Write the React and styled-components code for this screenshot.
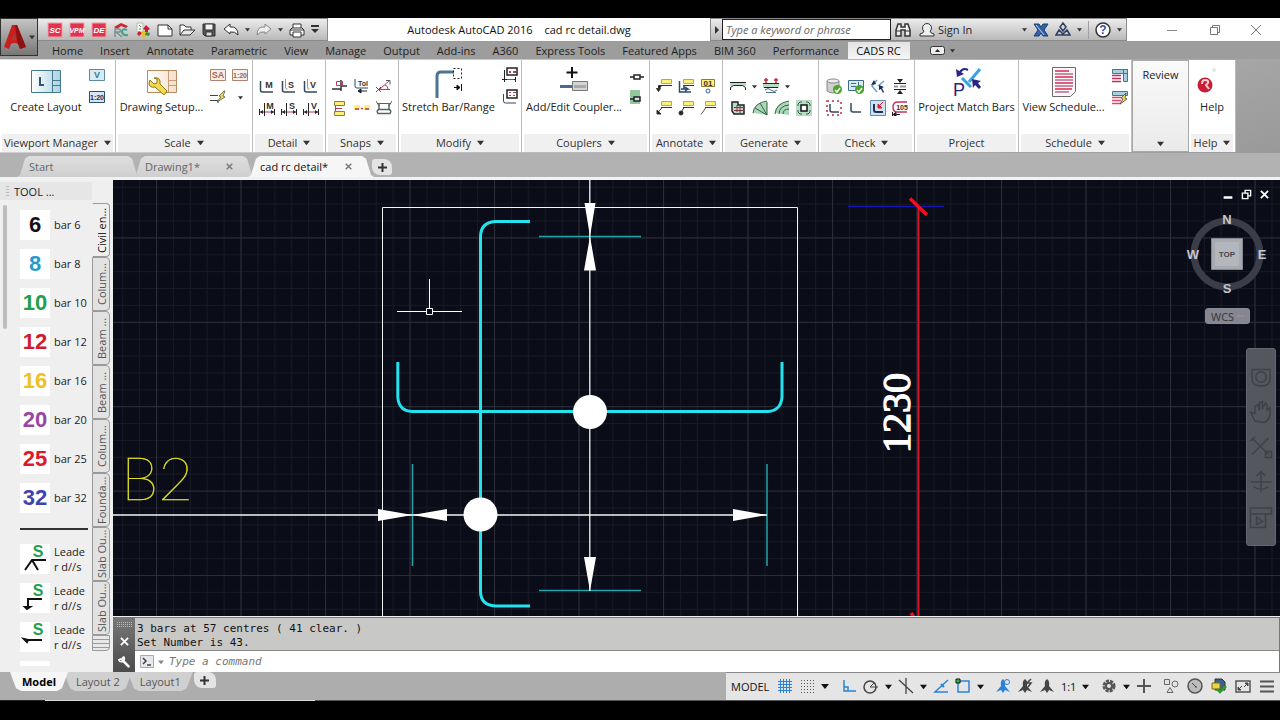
import styled, { createGlobalStyle } from "styled-components";

const GlobalStyle = createGlobalStyle`
  * {
    box-sizing: border-box;
  }
  body {
    margin: 0;
    background: #000;
    font-family: "Open Sans", "Noto Sans", sans-serif;
    font-size: 11px;
    color: #222;
  }
  button, input {
    font: inherit;
    color: inherit;
    border: none;
    background: none;
    padding: 0;
    margin: 0;
  }
  svg {
    display: block;
    flex: none;
  }
`;

const Screen = styled.div`
  display: flex;
  flex-direction: column;
  height: 100vh;
  padding: 18px 0 19px;
  background: #000;
  overflow: hidden;
`;

/* ---------- header ---------- */

const Header = styled.header`
  display: flex;
  flex: none;
  background: #9d9d9d;
`;

const AppButton = styled.button`
  display: flex;
  align-items: center;
  justify-content: center;
  gap: 3px;
  width: 38px;
  height: 38px;
  flex: none;
  border: 1px solid #333;
  background: linear-gradient(#c4c4c4, #777);
`;

const HeaderMain = styled.div`
  flex: 1;
  min-width: 0;
`;

const TitleBar = styled.div`
  display: flex;
  height: 23px;
  background: #fff;
`;

const QuickAccess = styled.div`
  display: flex;
  align-items: center;
  gap: 6px;
  padding: 0 8px 0 9px;
  border: 1px solid #8a8a8a;
  border-left: none;
  background: linear-gradient(#ececec, #b9b9b9);
`;

const WindowTitle = styled.h1`
  flex: 1;
  display: flex;
  align-items: center;
  justify-content: center;
  gap: 12px;
  margin: 0;
  font-size: 11px;
  font-weight: 400;
  color: #111;
  white-space: nowrap;
`;

const InfoCenter = styled.div`
  display: flex;
  align-items: center;
  width: 417px;
  border: 1px solid #8a8a8a;
  background: linear-gradient(#ececec, #b9b9b9);
`;

const SearchBox = styled.input`
  width: 169px;
  height: 21px;
  padding: 0 3px;
  border: 1px solid #222;
  background: #fff;
  &::placeholder {
    color: #666;
    font-style: italic;
    opacity: 1;
  }
`;

const SignIn = styled.button`
  display: flex;
  align-items: center;
  gap: 3px;
  flex: 1;
  margin-left: 4px;
`;

const InfoTools = styled.div`
  display: flex;
  align-items: center;
  gap: 6px;
  padding-right: 4px;
`;

const Separator = styled.span`
  width: 1px;
  height: 18px;
  background: #a0a0a0;
`;

const WindowButtons = styled.div`
  display: flex;
  align-items: center;
  justify-content: flex-end;
  gap: 26px;
  width: 153px;
  padding-right: 16px;
`;

const MenuTabs = styled.nav`
  display: flex;
  align-items: flex-end;
  height: 18px;
  padding-left: 6px;
`;

const MenuTab = styled.button`
  height: 17px;
  padding: 0 9px 0 8px;
  line-height: 17px;
  white-space: nowrap;
  color: ${(p) => (p.$active ? "#111" : "#222")};
  background: ${(p) => (p.$active ? "linear-gradient(#e2e2e2, #f6f6f6)" : "none")};
`;

const MenuToggle = styled.button`
  display: flex;
  align-items: center;
  gap: 5px;
  height: 17px;
  margin-left: 20px;
`;

const IconButton = styled.button`
  display: flex;
  align-items: center;
  justify-content: center;
  flex: none;
`;

/* ---------- ribbon ---------- */

const Ribbon = styled.section`
  display: flex;
  flex: none;
  height: 94px;
  padding: 1px 1px 1px 0;
  background: linear-gradient(160deg, #dcdcdc, #999);
`;

const Panel = styled.div`
  display: flex;
  flex-direction: column;
  flex: none;
  width: ${(p) => p.$width}px;
  border-right: 1px solid #bdbdbd;
  background: #fff;
`;

const PanelBody = styled.div`
  display: flex;
  flex: 1;
  justify-content: center;
  gap: 7px;
  padding-top: ${(p) => p.$top || 7}px;
`;

const PanelTitle = styled.button`
  display: flex;
  align-items: center;
  justify-content: center;
  gap: 6px;
  height: 18px;
  margin: 0 2px;
  padding-bottom: 2px;
  background: #f0f0f0;
  color: #333;
  white-space: nowrap;
`;

const BigButton = styled.button`
  display: flex;
  flex-direction: column;
  align-items: center;
  justify-content: space-between;
  height: 48px;
  white-space: nowrap;
  line-height: 16px;
`;

const SmallGrid = styled.div`
  display: grid;
  grid-template-columns: repeat(${(p) => p.$cols}, 16px);
  grid-auto-rows: 16px;
  gap: 6px;
  align-content: start;
`;

const ToolRow = styled.div`
  display: flex;
  align-items: center;
  gap: 6px;
  height: 16px;
`;

const ToolRows = styled.div`
  display: flex;
  flex-direction: column;
  gap: 6px;
`;

const ReviewPanel = styled.button`
  display: flex;
  flex-direction: column;
  align-items: center;
  justify-content: space-between;
  width: 57px;
  padding: 6px 0 4px;
  border: 1px solid #a8a8a8;
  background: linear-gradient(#fafafa, #eaeaea);
`;

/* ---------- file tabs ---------- */

const FileTabs = styled.nav`
  display: flex;
  align-items: flex-end;
  flex: none;
  height: 27px;
  padding-left: 17px;
  border-bottom: 3px solid #f2f2f2;
  background: #b2b2b2;
`;

const FileTab = styled.div`
  position: relative;
  display: flex;
  align-items: center;
  justify-content: space-between;
  width: ${(p) => p.$width}px;
  height: 21px;
  margin-right: -7px;
  padding: 0 22px 0 12px;
  color: ${(p) => (p.$active ? "#111" : "#666")};
  z-index: ${(p) => (p.$active ? 2 : 0)};
  &::before {
    content: "";
    position: absolute;
    inset: 0;
    z-index: -1;
    background: ${(p) => (p.$active ? "#f6f6f6" : "linear-gradient(#dedede, #cfcfcf)")};
    clip-path: polygon(
      0 100%, 3px 90%, 8px 12%, 12px 0,
      calc(100% - 12px) 0, calc(100% - 8px) 12%, calc(100% - 3px) 90%, 100% 100%
    );
  }
`;

const AddTab = styled.button`
  display: flex;
  align-items: center;
  justify-content: center;
  width: ${(p) => p.$width || 20}px;
  height: 16px;
  margin: 0 0 2px 5px;
  border-radius: 3px 8px 3px 8px;
  background: #e4e4e4;
`;

/* ---------- workspace ---------- */

const Workspace = styled.main`
  display: flex;
  flex: 1;
  min-height: 0;
`;

const Palette = styled.aside`
  display: flex;
  flex: none;
  width: 113px;
  background: #efefef;
`;

const PaletteMain = styled.div`
  display: flex;
  flex-direction: column;
  flex: 1;
  min-width: 0;
  overflow: hidden;
`;

const PaletteTitle = styled.div`
  display: flex;
  align-items: center;
  gap: 5px;
  height: 18px;
  margin-top: 2px;
  padding-left: 6px;
  background: #e6e6e6;
  color: #222;
`;

const PaletteScroll = styled.div`
  display: flex;
  gap: 13px;
  flex: 1;
  min-height: 0;
  padding: 5px 4px 6px 3px;
`;

const Thumb = styled.div`
  flex: none;
  width: 4px;
  height: 124px;
  border-radius: 2px;
  background: #bdbdbd;
`;

const PaletteList = styled.div`
  flex: 1;
  overflow: hidden;
`;

const PaletteItem = styled.button`
  display: flex;
  align-items: center;
  gap: 4px;
  width: 100%;
  height: 39px;
  line-height: 15px;
  text-align: left;
`;

const Swatch = styled.span`
  display: flex;
  align-items: center;
  justify-content: center;
  flex: none;
  width: 30px;
  height: 30px;
  background: #fff;
  color: ${(p) => p.$color};
  font: bold 22px "Liberation Sans", Arial, sans-serif;
`;

const ItemLabel = styled.span`
  width: 33px;
  word-break: ${(p) => (p.$wrap ? "break-all" : "normal")};
  white-space: ${(p) => (p.$wrap ? "normal" : "nowrap")};
`;

const Divider = styled.hr`
  height: 2px;
  margin: 11px 0 9px -6px;
  border: none;
  background: #333;
`;

const PaletteTabs = styled.div`
  display: flex;
  flex-direction: column;
  width: 18px;
  margin: 23px 3px 0 0;
`;

const PaletteTab = styled.button`
  display: flex;
  align-items: center;
  justify-content: center;
  height: 54px;
  writing-mode: vertical-rl;
  transform: rotate(180deg);
  border: 1px solid #9a9a9a;
  border-right-color: ${(p) => (p.$active ? "#efefef" : "#9a9a9a")};
  border-radius: 4px 0 0 4px;
  background: ${(p) => (p.$active ? "#efefef" : "#e2e2e2")};
  color: ${(p) => (p.$active ? "#111" : "#555")};
  white-space: nowrap;
`;

const TabStack = styled.div`
  height: 16px;
  border: 1px solid #9a9a9a;
  border-radius: 0 0 4px 0;
  background: repeating-linear-gradient(#e8e8e8 0 3px, #9a9a9a 3px 4px);
`;

const Editor = styled.div`
  display: flex;
  flex-direction: column;
  flex: 1;
  min-width: 0;
`;

const Canvas = styled.div`
  position: relative;
  flex: 1;
  min-height: 0;
  overflow: hidden;
  border-bottom: 1px solid #f0f0f0;
  background: #0a0c17;
`;

const Drawing = styled.svg`
  position: absolute;
  inset: 0;
  width: 100%;
  height: 100%;
`;

const ViewportButtons = styled.div`
  position: absolute;
  top: 9px;
  right: 11px;
  display: flex;
  gap: 8px;
`;

const ViewCube = styled.div`
  position: absolute;
  top: 32px;
  right: 10px;
`;

const WcsButton = styled.button`
  position: absolute;
  top: 128px;
  right: 30px;
  display: flex;
  align-items: center;
  justify-content: space-between;
  width: 45px;
  height: 16px;
  padding: 0 5px;
  border: 1px solid #8b8d96;
  border-radius: 3px;
  background: #85868f;
  color: #33353d;
`;

const NavBar = styled.div`
  position: absolute;
  top: 168px;
  right: 4px;
  display: flex;
  flex-direction: column;
  align-items: center;
  justify-content: space-between;
  width: 30px;
  height: 198px;
  padding: 16px 0;
  border: 1px solid #65666e;
  border-radius: 3px;
  background: #55575e;
`;

/* ---------- command line ---------- */

const Command = styled.section`
  display: flex;
  flex: none;
  height: 55px;
  padding: 1px 1px 0 0;
  background: #777;
`;

const CommandGrip = styled.div`
  display: flex;
  flex-direction: column;
  align-items: center;
  justify-content: space-between;
  width: 22px;
  padding: 4px 0 4px;
  background: linear-gradient(#777, #4c4c4c);
`;

const CommandBody = styled.div`
  flex: 1;
  font-family: "DejaVu Sans Mono", monospace;
`;

const History = styled.div`
  height: 33px;
  padding: 4px 2px;
  line-height: 14px;
  border-bottom: 1px solid #888;
  background: #c8c8c6;
  color: #111;
  white-space: pre;
`;

const Prompt = styled.label`
  display: flex;
  align-items: center;
  gap: 4px;
  height: 21px;
  padding-left: 5px;
  background: #fff;
`;

const CommandInput = styled.input`
  flex: 1;
  height: 18px;
  margin-left: 1px;
  outline: none;
  &::placeholder {
    color: #777;
    font-style: italic;
    opacity: 1;
  }
`;

/* ---------- footer ---------- */

const Footer = styled.footer`
  display: flex;
  flex: none;
  height: 28px;
  background: #adadad;
`;

const ScreenEdge = styled.div`
  flex: none;
  height: 1px;
  background: linear-gradient(90deg, #222 45px, #d8d8d8 45px 315px, #555 315px);
`;

const LayoutTabs = styled.nav`
  display: flex;
  align-items: flex-start;
  flex: 1;
  padding-left: 10px;
`;

const LayoutTab = styled.button`
  position: relative;
  height: 19px;
  margin-right: -4px;
  padding: 0 12px 1px;
  z-index: ${(p) => (p.$active ? 2 : 0)};
  color: ${(p) => (p.$active ? "#000" : "#555")};
  font-weight: ${(p) => (p.$active ? 700 : 400)};
  white-space: nowrap;
  &::before {
    content: "";
    position: absolute;
    inset: 0;
    z-index: -1;
    background: ${(p) => (p.$active ? "#f6f6f6" : "#d0d0d0")};
    clip-path: polygon(
      0 0, 100% 0, calc(100% - 6px) 85%, calc(100% - 11px) 100%,
      11px 100%, 6px 85%
    );
  }
`;

const StatusBar = styled.div`
  display: flex;
  align-items: center;
  justify-content: space-between;
  width: 554px;
  padding: 0 5px 1px;
  border-top: 1px solid #888;
  background: #e5e5e5;
  color: #111;
`;

const StatusGroup = styled.div`
  display: flex;
  align-items: center;
  gap: ${(p) => p.$gap || 6}px;
`;

const Icon = ({ size = 16, box = "0 0 16 16", children, h }) => (
  <svg
    width={size}
    height={h || size}
    viewBox={box}
    fill="none"
    stroke="#333"
    aria-hidden="true"
  >
    {children}
  </svg>
);

const Caret = ({ w = 7, color = "#333" }) => (
  <svg width={w} height={w} viewBox="0 0 8 8" fill={color} aria-hidden="true">
    <path d="M0 2h8L4 7z" />
  </svg>
);

const Cross = ({ size = 9, color = "#777", width = 2 }) => (
  <svg width={size} height={size} viewBox="0 0 10 10" stroke={color} strokeWidth={width} aria-hidden="true">
    <path d="M1 1l8 8M9 1l-8 8" />
  </svg>
);

const Plus = () => (
  <svg width="9" height="9" viewBox="0 0 9 9" stroke="#333" strokeWidth="2" aria-hidden="true">
    <path d="M4.500 0v9M0 4.500h9" />
  </svg>
);

const Glyph = ({ x, y, size = 8, color = "#333", italic, light, children }) => (
  <text
    x={x}
    y={y}
    fontSize={size}
    fill={color}
    stroke="none"
    fontWeight={light ? 400 : 700}
    fontStyle={italic ? "italic" : "normal"}
    fontFamily="Liberation Sans, sans-serif"
    textAnchor="middle"
  >
    {children}
  </text>
);

const Tool = ({ label, children }) => (
  <IconButton aria-label={label}>{children}</IconButton>
);

const RedBadge = ({ text }) => (
  <Icon>
    <rect x="1" y="1" width="14" height="14" fill="#e0334c" stroke="#f3a0aa" />
    <Glyph x="8" y="11" size={text.length > 2 ? 7 : 8} color="#fff" italic>
      {text}
    </Glyph>
  </Icon>
);

const quickTools = [
  ["SC", <RedBadge text="SC" />],
  ["VPM", <RedBadge text="VPM" />],
  ["DE", <RedBadge text="DE" />],
  [
    "RC",
    <Icon>
      <path d="M1 5l7-4 7 3-2 2-5-2-4 3z" fill="#d3242f" stroke="none" />
      <path d="M2 15V7h4q2 0 1 3H3l6 5" stroke="#7d8f92" strokeWidth="1.500" />
      <path d="M14 8q-5-2-5 2 1 4 6 3" stroke="#3aa58d" strokeWidth="2" />
    </Icon>,
  ],
  [
    "Add-in",
    <Icon>
      <path d="M2 1h6v9H2z" fill="#f4f4f4" stroke="#bbb" />
      <path d="M4 3l2 2M4 7h2" stroke="#4b9a3d" />
      <path d="M7 9h4v6H7z" fill="#e9be2a" stroke="none" />
      <path d="M11 3l4 4-2 1v2h-3V8L8 7zM4 9l3 2-3 3-2-2z" fill="#c8202c" stroke="none" />
      <path d="M11 10l4 1-1 3-4-1z" fill="#3c8c34" stroke="none" />
    </Icon>,
  ],
  [
    "New",
    <Icon>
      <path d="M1 3h10l4 4v7H1z" fill="#fff" />
      <path d="M11 3v4h4" />
    </Icon>,
  ],
  [
    "Open",
    <Icon>
      <path d="M1 13V3h4l2 2h5v3" fill="#fff" />
      <path d="M1 13l4-5h11l-5 5z" fill="#e8e8e8" />
    </Icon>,
  ],
  [
    "Save",
    <Icon>
      <path d="M2 2h12v12H4l-2-2z" fill="#555" />
      <path d="M4 2h8v6H4z" fill="#f2f2f2" />
      <path d="M5 10h6v4H5z" fill="#ddd" />
    </Icon>,
  ],
  [
    "Undo",
    <Icon>
      <path d="M1 7l6-5v3q8-1 8 8-3-4-8-3v2z" fill="#fff" />
    </Icon>,
  ],
  ["Undo list", <Caret w={5} />],
  [
    "Redo",
    <Icon>
      <path d="M15 7L9 2v3q-8-1-8 8 3-4 8-3v2z" fill="#eee" stroke="#888" />
    </Icon>,
  ],
  ["Redo list", <Caret w={5} />],
  [
    "Plot",
    <Icon>
      <path d="M4 6V2h8v4M4 13H1V8l2-2h10l2 2v5h-3" fill="#fff" />
      <path d="M4 10h8v5H4z" fill="#fff" />
      <path d="M1 8h14" />
    </Icon>,
  ],
  [
    "Customize",
    <svg width="8" height="9" viewBox="0 0 8 9" fill="#333" aria-hidden="true">
      <path d="M0 0h8v2H0zM0 4h8L4 8z" />
    </svg>,
  ],
];

const menuTabs = [
  "Home",
  "Insert",
  "Annotate",
  "Parametric",
  "View",
  "Manage",
  "Output",
  "Add-ins",
  "A360",
  "Express Tools",
  "Featured Apps",
  "BIM 360",
  "Performance",
  "CADS RC",
];

const BoxedText = ({ text, stroke, fill, color }) => (
  <Icon>
    <path d="M.5 2.500h15v11H.5z" fill={fill} stroke={stroke} />
    <Glyph x="8" y="11" size={text.length > 2 ? 7 : 9} color={color}>
      {text}
    </Glyph>
  </Icon>
);

const DetailBar = ({ letter }) => (
  <Icon>
    <path d="M1.500 3v9q0 2 2 2H14" stroke="#34495e" strokeWidth="1.500" />
    {letter !== "M" && <path d="M4.500 1v9q0 1 2 1" stroke="#999" />}
    <Glyph x="10" y="10" size={9}>
      {letter}
    </Glyph>
  </Icon>
);

const DetailRange = ({ letter }) => (
  <Icon>
    <path d="M1 12h14" stroke="#b0304f" />
    <path d="M.5 9v6M15.500 9v6M5.500 3v13" stroke="#222" />
    <path d="M1 12l3-2v4zM15 12l-3-2v4z" fill="#222" stroke="none" />
    <Glyph x="11" y="9" size={9}>
      {letter}
    </Glyph>
  </Icon>
);

const Leader = ({ kind }) => (
  <Icon>
    <path d="M5.500 1.500h10v4h-10z" fill="#fbf07a" stroke="#b9a845" />
    <path d="M5 7.500h11" stroke="#333" />
    {kind === "down" && <path d="M6 7.500H2.500v5M.5 10.500l2 3 2-3z" fill="#222" />}
    {kind === "bar" && <path d="M1.500 3v11H13M6 7v4M3 11h7l-3-2M7 13l3-2" stroke="#2b4964" strokeWidth="1.500" />}
    {kind === "arrow" && <path d="M6 7.500l-4 5M1 10v4h4z" fill="#222" />}
    {kind === "dot" && (
      <>
        <path d="M6 7.500l-3 5" />
        <circle cx="3" cy="13" r="2" fill="#222" />
      </>
    )}
    {kind === "plain" && <path d="M6 7.500l-5 7" stroke="#555" />}
  </Icon>
);

const detailTools = (
  <SmallGrid $cols={3}>
    {["M", "S", "V"].map((l) => (
      <Tool key={l} label={`Bar ${l}`}>
        <DetailBar letter={l} />
      </Tool>
    ))}
    {["M", "S", "V"].map((l) => (
      <Tool key={l} label={`Range ${l}`}>
        <DetailRange letter={l} />
      </Tool>
    ))}
  </SmallGrid>
);

const snapTools = (
  <SmallGrid $cols={3}>
    <Tool label="Snap line">
      <Icon>
        <path d="M0 11h9M9 2v11M9 8h6" stroke="#333" strokeWidth="1.500" />
        <path d="M4.500 3.500h6v4h-6z" stroke="#c2345a" />
      </Icon>
    </Tool>
    <Tool label="Tolerance">
      <Icon>
        <path d="M1 1v7q0 2 2 2h11" stroke="#2b4964" />
        <path d="M4 13h9M4 13l3-2v4z" fill="#222" stroke="#222" />
        <Glyph x="9" y="8" size={7}>
          Tol
        </Glyph>
      </Icon>
    </Tool>
    <Tool label="Snap angle">
      <Icon>
        <path d="M3 12L14 2M3 11.500h11M9 7q3 1 3 4" stroke="#c2345a" />
        <path d="M0 9l5 5M5 9l-5 5M10 2.500h4v4" stroke="#555" />
      </Icon>
    </Tool>
    <Tool label="Snap edges">
      <Icon>
        <path d="M2.500 1.500h10v4h-10zM2.500 11.500h10v4h-10z" fill="#fbf07a" stroke="#8a7d3e" />
        <path d="M3.500 6v5M3 8.500h7" stroke="#c2345a" />
      </Icon>
    </Tool>
    <Tool label="Snap middle">
      <Icon>
        <path d="M0 5h6v5H0zM10 5h6v5h-6z" fill="#fbf07a" stroke="none" />
        <path d="M1 9h4M7 8.500h2M11 9h4" stroke="#c2345a" strokeWidth="1.500" />
      </Icon>
    </Tool>
    <Tool label="Snap shape">
      <Icon>
        <path d="M2 13.500h12q2-3-1-4H3q-3 1-1 4zM3 9V4M13 9V4" stroke="#566" strokeWidth="1.500" />
        <path d="M1 3.500h14M0 1l3 5M16 1l-3 5" stroke="#566" />
      </Icon>
    </Tool>
  </SmallGrid>
);

const annotateTools = (
  <SmallGrid $cols={3}>
    <Tool label="Leader down">
      <Leader kind="down" />
    </Tool>
    <Tool label="Leader bar">
      <Leader kind="bar" />
    </Tool>
    <Tool label="Bar mark">
      <Icon>
        <path d="M1.500 1.500h13v7h-13z" fill="#fbf07a" stroke="#8a7d3e" />
        <Glyph x="8" y="8" size={8}>
          01
        </Glyph>
        <circle cx="8" cy="13" r="2" stroke="#34609a" />
      </Icon>
    </Tool>
    <Tool label="Leader arrow">
      <Leader kind="arrow" />
    </Tool>
    <Tool label="Leader dot">
      <Leader kind="dot" />
    </Tool>
    <Tool label="Leader plain">
      <Leader kind="plain" />
    </Tool>
  </SmallGrid>
);

const generateTools = (
  <ToolRows>
    <ToolRow>
      <Tool label="Slab">
        <Icon>
          <path d="M0 4h16v4H0z" fill="#b9dcc4" stroke="none" />
          <path d="M0 4.500h16M.5 12V9.500l3-2h9l3 2V12" stroke="#222" />
        </Icon>
      </Tool>
      <Caret w={5} />
      <Tool label="Beam">
        <Icon>
          <path d="M0 5h16v5H0z" fill="#b9dcc4" stroke="none" />
          <path d="M0 5.500h16M1 9.500h14" stroke="#222" />
          <path d="M3 0v5M1 2h4M13 0v5M11 2h4" stroke="#c8283c" strokeWidth="1.500" />
          <path d="M2 12q3-3 6 0t6 0M3 14.500h10" stroke="#4c6d8a" />
        </Icon>
      </Tool>
      <Caret w={5} />
    </ToolRow>
    <ToolRow>
      <Tool label="Wall">
        <Icon>
          <path d="M2 2h6v3h6v9H4l-2-3z" fill="#b9dcc4" stroke="#222" strokeWidth="1.500" />
          <path d="M4 7.500h9M4 10.500h9M7 5v7M10 6v7" stroke="#7d3545" />
        </Icon>
      </Tool>
      <Tool label="Fan">
        <Icon>
          <path d="M15 15V2Q2 3 1 13z" fill="#a9d8b8" stroke="none" />
          <path d="M1 13Q2 3 15 1M15 15L3 8M15 15L8 3M15 15V2" stroke="#355e45" />
        </Icon>
      </Tool>
      <Tool label="Arc">
        <Icon>
          <path d="M15 15V2Q2 3 1 13z" fill="#a9d8b8" stroke="none" />
          <path d="M1 14Q2 3 15 1M5 14q0-8 10-9M9 14q0-5 6-5" stroke="#355e45" />
        </Icon>
      </Tool>
      <Tool label="Column">
        <Icon>
          <path d="M0 0h16v16H0z" fill="#b9dcc4" stroke="none" />
          <path d="M5 5h6v6H5z" fill="#fff" stroke="#111" strokeWidth="1.500" />
          <path d="M2 6V4l2-2h2M10 2h2l2 2v2M2 10v2l2 2h2M10 14h2l2-2v-2" stroke="#355e45" />
        </Icon>
      </Tool>
    </ToolRow>
  </ToolRows>
);

const checkTools = (
  <SmallGrid $cols={4}>
    <Tool label="Check database">
      <Icon>
        <path d="M1 3v10q6 4 12 0V3" fill="#cfcfcf" stroke="#888" />
        <ellipse cx="7" cy="3" rx="6" ry="2" fill="#eee" stroke="#888" />
        <circle cx="11.500" cy="11.500" r="4.500" fill="#4aa52e" stroke="none" />
        <path d="M9 12l2 2 3-4" stroke="#fff" strokeWidth="1.500" />
      </Icon>
    </Tool>
    <Tool label="Check schedule">
      <Icon>
        <path d="M.5 2.500h15v10H.5z" fill="#dbe9f2" stroke="#3f6c86" />
        <path d="M3 5.500h5M3 8.500h5M10.500 4v5" stroke="#3f6c86" />
        <circle cx="11.500" cy="11.500" r="4.500" fill="#4aa52e" stroke="none" />
        <path d="M9 12l2 2 3-4" stroke="#fff" strokeWidth="1.500" />
      </Icon>
    </Tool>
    <Tool label="Check links">
      <Icon>
        <path d="M7 2L2 8l5 6M8 8l6-5" stroke="#6f9fc4" strokeWidth="1.500" />
        <path d="M4 2l-3 5 5-1zM9 7l5 2-2 1 2 4-1 1-2-4-2 1z" fill="#1e2c58" stroke="none" />
      </Icon>
    </Tool>
    <Tool label="Check spacing">
      <Icon>
        <path d="M2 5.500h12M2 11.500h12" stroke="#222" />
        <path d="M8 5L5 1h6zM8 12l-3 4h6z" fill="#222" stroke="none" />
        <path d="M2 8.500h4M8 8.500h6" stroke="#999" strokeWidth="2" />
      </Icon>
    </Tool>
    <Tool label="Check area">
      <Icon>
        <path d="M1 1h14v14H1z" stroke="#c8283c" strokeWidth="1.500" strokeDasharray="2 3" />
        <path d="M4 4v6q0 2 2 2h7" stroke="#34495e" strokeWidth="1.500" />
      </Icon>
    </Tool>
    <Tool label="Check bar">
      <Icon>
        <path d="M3 3v7q0 2 2 2h8" stroke="#34495e" strokeWidth="1.500" />
      </Icon>
    </Tool>
    <Tool label="Check shape">
      <Icon>
        <path d="M.5.5h15v15H.5z" fill="#cfe2f1" stroke="#6488a8" />
        <path d="M4 4v6q0 2 2 2h7" stroke="#1e3656" strokeWidth="2" />
        <path d="M13 2L9 6M8 4v4h4z" fill="#d8232f" stroke="#d8232f" />
      </Icon>
    </Tool>
    <Tool label="Check number">
      <Icon>
        <path d="M15 2H6Q1 2 1 7q0 5 4 5h10" stroke="#c2345a" strokeWidth="1.500" />
        <path d="M1 14.500h7M.5 12v4M1 14.500l3-2v4z" fill="#222" stroke="#222" />
        <Glyph x="10" y="10" size={7}>
          105
        </Glyph>
      </Icon>
    </Tool>
  </SmallGrid>
);

const SheetIcon = ({ warm }) => (
  <Icon size={30} h={28} box="0 0 30 28">
    <defs>
      <linearGradient id={warm ? "warm" : "cool"} x1="0" x2="1">
        <stop offset="0" stopColor="#fff" />
        <stop offset="1" stopColor={warm ? "#f6dfc8" : "#a9d3e4"} />
      </linearGradient>
    </defs>
    <path d="M.5 3.500h29v22H.5z" fill={`url(#${warm ? "warm" : "cool"})`} stroke={warm ? "#b98b62" : "#46788c"} />
    <path d="M21.500 4v21M21.500 13.500h8M21.500 18.500h8" stroke={warm ? "#c99b76" : "#46788c"} />
    {warm ? (
      <path
        d="M3 13l4 4 3-1v-4l-3-1q5-1 6 3v3l7 7-3 4-9-8q-6 1-6-4z"
        fill="#f3dc4c"
        stroke="#8d7420"
      />
    ) : (
      <path d="M9 10v8h4" stroke="#36566b" strokeWidth="2" />
    )}
  </Icon>
);

const StretchIcon = () => (
  <Icon size={28} h={32} box="0 0 28 32">
    <path d="M2 31V9q0-4 4-4h13" stroke="#4d7396" strokeWidth="3" />
    <path d="M18.500 1.500h8v10h-8z" stroke="#222" strokeDasharray="2 2" />
    <path d="M19 20.500h6M22 18l3 2.500-3 2.500zM26.500 17v7" fill="#111" stroke="#111" />
  </Icon>
);

const CouplerIcon = () => (
  <Icon size={28} h={32} box="0 0 28 32">
    <path d="M12 0v11M6.500 5.500h11" stroke="#111" strokeWidth="2" />
    <path d="M0 19.500h14" stroke="#486a8c" strokeWidth="3" />
    <path d="M12.500 14.500h15v9h-15z" fill="#d5d5d5" stroke="#777" />
    <path d="M14 18h12v3H14z" fill="#aaa" stroke="none" />
  </Icon>
);

const MatchIcon = () => (
  <Icon size={32} h={32} box="0 0 32 32">
    <path d="M29 2L18 15M11 11l9 9" stroke="#37a4e0" strokeWidth="3" />
    <path d="M17 3Q11 0 8 7" stroke="#2b2480" strokeWidth="2" />
    <path d="M5 2l1 8 7-3zM21 12l9 2-3 2 3 4-2 2-4-4-2 3z" fill="#2b2480" stroke="none" />
    <Glyph x="8" y="29" size={18} color="#2b2480" light>
      P
    </Glyph>
  </Icon>
);

const ScheduleIcon = () => (
  <Icon size={24} h={31} box="0 0 24 31">
    <path d="M.5.5h23v24l-5 5H.5z" fill="#fff7f8" stroke="#6b6b6b" />
    <path d="M3 4h14M3 10h18M3 16h18M3 22h17" stroke="#e35b7c" strokeWidth="2" />
    <path d="M3 7h18M3 13h18M3 19h18M3 25h14" stroke="#8c2750" />
  </Icon>
);

const CanvasDrawing = () => (
  <Drawing viewBox="113 180 1167 437" preserveAspectRatio="xMinYMin slice" aria-hidden="true">
    <defs>
      <pattern id="minor" x="156" y="153" width="16.900" height="16.880" patternUnits="userSpaceOnUse">
        <path d="M.5 0v17M0 .5h17" stroke="#171a25" fill="none" />
      </pattern>
      <pattern id="major" x="156" y="153" width="84.500" height="84.400" patternUnits="userSpaceOnUse">
        <path d="M.5 0v85M0 .5h85" stroke="#2b2d38" fill="none" />
      </pattern>
    </defs>
    <rect x="113" y="180" width="1167" height="437" fill="url(#minor)" />
    <rect x="113" y="180" width="1167" height="437" fill="url(#major)" />
    <path d="M382.500 617V207.500h415V617" fill="none" stroke="#f4f4f4" />
    <g stroke="#25a3ab" strokeWidth="1.500">
      <path d="M539 236.500h102M539 590.500h102M412.500 464v102M767 464v102" />
    </g>
    <g fill="none" stroke="#22e3ee" strokeWidth="3">
      <path d="M530 221.500h-35q-14.500 1-14.500 15.500v354q0 14 14.500 15h35" />
      <path d="M397.800 362v35q1 14 14.200 14.500h356q13-1 14-14.500v-35" />
    </g>
    <path d="M589.800 180v411M113 515h654" stroke="#f4f4f4" strokeWidth="1.300" />
    <g fill="#fff">
      <path d="M584.500 203h11L590 236.500zM584 270.500h12l-6-34zM584 557h12l-6 34z" />
      <path d="M378 509v12l34.500-6zM447 509v12l-34.500-6zM733 509v12l34-6z" />
      <circle cx="590" cy="412" r="17" />
      <circle cx="480.500" cy="514.500" r="17" />
    </g>
    <path d="M429.500 279v29M397 311.500h29M433 311.500h29M426.500 308.500h6v6h-6z" fill="none" stroke="#fff" />
    <path d="M848 206.500h96" stroke="#1515b4" strokeWidth="1.500" />
    <path d="M918.500 207v410" stroke="#d8121e" strokeWidth="2" />
    <path d="M910 198.500l17 16.500M911 613l3 4" stroke="#ee1220" strokeWidth="3.500" />
    <text
      x="121"
      y="500"
      fontFamily="Lato, sans-serif"
      fontWeight="100"
      fontSize="60"
      fill="#e0e01c"
      stroke="#e0e01c"
      strokeWidth=".5"
    >
      B2
    </text>
    <text
      transform="translate(910 453) rotate(-90)"
      fontFamily="Liberation Serif, serif"
      fontSize="40"
      fill="#fff"
      stroke="#fff"
      strokeWidth="1.300"
    >
      1230
    </text>
  </Drawing>
);

const Compass = () => (
  <svg width="84" height="84" viewBox="0 0 84 84" aria-hidden="true">
    <circle cx="41" cy="42" r="33" fill="none" stroke="#3b3d48" strokeWidth="7" />
    <path d="M25.500 26.500h31v31h-31z" fill="#a8aab2" stroke="#85878f" />
    <path d="M29 30h24v24H29z" fill="#b4b6bd" />
    <Glyph x="41" y="45" size={8} color="#444650">
      TOP
    </Glyph>
    <Glyph x="41" y="12" size={13} color="#c4c6d0">
      N
    </Glyph>
    <Glyph x="41" y="81" size={13} color="#c4c6d0">
      S
    </Glyph>
    <Glyph x="7" y="47" size={13} color="#c4c6d0">
      W
    </Glyph>
    <Glyph x="76" y="47" size={13} color="#c4c6d0">
      E
    </Glyph>
  </svg>
);

const bars = [
  ["6", "#111"],
  ["8", "#1f9bd0"],
  ["10", "#23a04c"],
  ["12", "#d01c2c"],
  ["16", "#eec11f"],
  ["20", "#9a45a0"],
  ["25", "#dc1a2b"],
  ["32", "#3c45ae"],
];

const leaders = [
  "M5 26l7-10h14M12 16l6 10",
  "M22 16H8v9M5 24h5l-3 2z",
  "M22 18H6M4 17l4 1-1 2z",
];

const paletteTabs = [
  "Civil en...",
  "Colum...",
  "Beam ...",
  "Beam ...",
  "Colum...",
  "Founda...",
  "Slab Ou...",
  "Slab Ou...",
];

const BLUE = "#2b83d8";

const Person = ({ color = "#444", extra }) => (
  <Icon>
    <path d="M8 1q3 2 2 7l5 6-5-2-2 3-2-3-5 2 5-6Q5 3 8 1z" fill={color} stroke="none" />
    {extra}
  </Icon>
);

function TopBar() {
  return (
    <Header>
      <AppButton aria-label="Application menu">
        <svg width="22" height="26" viewBox="0 0 22 26" aria-hidden="true">
          <path d="M8 1h5l9 22-6 2-2-5q-4-2-7 0l-2 5-5-2z" fill="#c9201f" />
          <path d="M11 1h2l9 22-6 2-3-8z" fill="#8f1213" />
          <path d="M10 9l3 7H8z" fill="#a53c3a" />
        </svg>
        <Caret w={6} />
      </AppButton>
      <HeaderMain>
        <TitleBar>
          <QuickAccess>
            {quickTools.map(([label, icon]) => (
              <Tool key={label} label={label}>
                {icon}
              </Tool>
            ))}
          </QuickAccess>
          <WindowTitle>
            <span>Autodesk AutoCAD 2016</span>
            <span>cad rc detail.dwg</span>
          </WindowTitle>
          <InfoCenter>
            <Tool label="Collapse search">
              <svg width="11" height="8" viewBox="0 0 11 8" fill="#333" aria-hidden="true">
                <path d="M4 0l4 4-4 4z" />
              </svg>
            </Tool>
            <SearchBox placeholder="Type a keyword or phrase" aria-label="Search" />
            <Tool label="Find">
              <Icon size={24} h={16} box="-4 0 24 16">
                <path d="M1 14V8l2-6h3v3h4V2h3l2 6v6h-5V8H6v6z" fill="#eee" strokeWidth="1.500" />
                <path d="M1 9h5M10 9h5" />
              </Icon>
            </Tool>
            <SignIn>
              <Icon>
                <circle cx="8" cy="6" r="4.500" fill="#eee" />
                <path d="M5 9q0 2-4 3v2h14v-2q-4-1-4-3" fill="#eee" />
              </Icon>
              Sign In
            </SignIn>
            <InfoTools>
              <Caret w={5} />
              <Tool label="Exchange">
                <Icon>
                  <path d="M1 2h5l2 3 2-3h5l-4 6 4 6h-5l-2-3-2 3H1l4-6z" fill="#2f62a8" stroke="#1f3d70" />
                  <path d="M3 3l8 10" stroke="#bcd3ee" />
                </Icon>
              </Tool>
              <Tool label="A360">
                <Icon>
                  <path d="M8 1l3 4-3 4-3-4zM1 13l3-5 5 5zM15 13l-3-5-5 5z" stroke="#2f3e66" strokeWidth="1.500" />
                </Icon>
              </Tool>
              <Caret w={5} />
              <Separator />
              <Tool label="Help">
                <Icon>
                  <circle cx="8" cy="8" r="7" fill="#fff" strokeWidth="1.500" />
                  <Glyph x="8" y="12" size={12} color="#2456a6">
                    ?
                  </Glyph>
                </Icon>
              </Tool>
              <Caret w={5} />
            </InfoTools>
          </InfoCenter>
          <WindowButtons>
            <Tool label="Minimize">
              <Icon>
                <path d="M3 8.500h10" stroke="#888" />
              </Icon>
            </Tool>
            <Tool label="Restore">
              <Icon>
                <path d="M4.500 5.500h7v7h-7zM6.500 5.500v-2h7v7h-2" stroke="#777" />
              </Icon>
            </Tool>
            <Tool label="Close">
              <Icon>
                <path d="M3 3l10 10M13 3L3 13" stroke="#777" />
              </Icon>
            </Tool>
          </WindowButtons>
        </TitleBar>
        <MenuTabs>
          {menuTabs.map((tab) => (
            <MenuTab key={tab} $active={tab === "CADS RC"}>
              {tab}
            </MenuTab>
          ))}
          <MenuToggle aria-label="Minimize ribbon">
            <svg width="15" height="9" viewBox="0 0 15 9" aria-hidden="true">
              <rect x=".5" y=".5" width="14" height="8" rx="2" fill="#eee" stroke="#333" />
              <path d="M5 6h5L7.500 3z" fill="#222" />
            </svg>
            <Caret w={5} />
          </MenuToggle>
        </MenuTabs>
      </HeaderMain>
    </Header>
  );
}

const RibbonPanel = ({ title, width, top, plain, children }) => (
  <Panel $width={width}>
    <PanelBody $top={top}>{children}</PanelBody>
    <PanelTitle>
      {title}
      {!plain && <Caret />}
    </PanelTitle>
  </Panel>
);

function RibbonBar() {
  return (
    <Ribbon>
      <RibbonPanel title="Viewport Manager" width={116}>
        <BigButton>
          <SheetIcon />
          Create Layout
        </BigButton>
        <SmallGrid $cols={1}>
          <Tool label="View">
            <BoxedText text="V" stroke="#5d8a9c" fill="#d6ebf3" color="#46788c" />
          </Tool>
          <Tool label="Scale">
            <BoxedText text="1:20" stroke="#27506f" fill="#d6e5f3" color="#152a60" />
          </Tool>
        </SmallGrid>
      </RibbonPanel>
      <RibbonPanel title="Scale" width={137}>
        <BigButton>
          <SheetIcon warm />
          Drawing Setup...
        </BigButton>
        <SmallGrid $cols={2}>
          <Tool label="SA">
            <BoxedText text="SA" stroke="#b08070" fill="#fdeee4" color="#a06a60" />
          </Tool>
          <Tool label="1:20">
            <BoxedText text="1:20" stroke="#b08070" fill="#fdeee4" color="#8a6a60" />
          </Tool>
          <Tool label="Edit scale">
            <Icon>
              <path d="M0 6.500h8M0 11.500h8V14" stroke="#444" />
              <path d="M14 2l-5 5 2 1-4 5 8-5-2-1 2-5z" fill="#f3dc4c" stroke="#555" strokeWidth=".8" />
            </Icon>
          </Tool>
          <Tool label="More scales">
            <Caret w={5} />
          </Tool>
        </SmallGrid>
      </RibbonPanel>
      <RibbonPanel title="Detail" width={73} top={18}>
        {detailTools}
      </RibbonPanel>
      <RibbonPanel title="Snaps" width={73} top={18}>
        {snapTools}
      </RibbonPanel>
      <RibbonPanel title="Modify" width={123}>
        <BigButton>
          <StretchIcon />
          Stretch Bar/Range
        </BigButton>
        <SmallGrid $cols={1}>
          <Tool label="Edit range">
            <Icon>
              <path d="M5 1h10v7H5z" fill="#fff" stroke="#222" strokeWidth="1.500" />
              <path d="M7 5h2M11 5h3" stroke="#c2345a" strokeWidth="2" />
              <path d="M2.500 3v12M0 12.500h13M13.500 10v5" stroke="#222" />
              <path d="M5 12.500h7" stroke="#c2345a" />
            </Icon>
          </Tool>
          <Tool label="Edit bar">
            <Icon>
              <path d="M5 1h10v8H5z" fill="#fff" stroke="#222" strokeWidth="1.500" />
              <path d="M7 3.500h2M11 3.500h3M7 6.500h2M11 6.500h2" stroke="#c2345a" />
              <path d="M1.500 5v7q0 2 2 2H14" stroke="#34495e" />
            </Icon>
          </Tool>
        </SmallGrid>
      </RibbonPanel>
      <RibbonPanel title="Couplers" width={128}>
        <BigButton>
          <CouplerIcon />
          Add/Edit Coupler...
        </BigButton>
        <SmallGrid $cols={1}>
          <Tool label="Coupler">
            <Icon>
              <path d="M1 10h4M11 10h4M5 8h6v4H5z" stroke="#222" strokeWidth="1.500" />
            </Icon>
          </Tool>
          <Tool label="Coupler end">
            <Icon>
              <path d="M1 1h10v14H1z" fill="#94c79b" stroke="none" />
              <path d="M1 10h4M5 8h6v4H5z" fill="#dde" stroke="#222" strokeWidth="1.500" />
            </Icon>
          </Tool>
        </SmallGrid>
      </RibbonPanel>
      <RibbonPanel title="Annotate" width={73} top={18}>
        {annotateTools}
      </RibbonPanel>
      <RibbonPanel title="Generate" width={96} top={18}>
        {generateTools}
      </RibbonPanel>
      <RibbonPanel title="Check" width={96} top={18}>
        {checkTools}
      </RibbonPanel>
      <RibbonPanel title="Project" width={104} plain>
        <BigButton>
          <MatchIcon />
          Project Match Bars
        </BigButton>
      </RibbonPanel>
      <RibbonPanel title="Schedule" width={113}>
        <BigButton>
          <ScheduleIcon />
          View Schedule...
        </BigButton>
        <SmallGrid $cols={1}>
          <Tool label="Schedule layout">
            <Icon>
              <path d="M.5 2.500h15v4H.5zM11.500 2.500h4v12h-4z" fill="#a8cfe0" stroke="#46788c" />
              <path d="M0 8.500h9M0 11.500h9M0 14.500h9" stroke="#b3305a" strokeWidth="1.500" />
            </Icon>
          </Tool>
          <Tool label="Schedule update">
            <Icon>
              <path d="M.5 2.500h15v4H.5z" fill="#a8cfe0" stroke="#46788c" />
              <path d="M0 8.500h9M0 11.500h9M0 14.500h9" stroke="#d84a6a" strokeWidth="1.500" />
              <path d="M14 4L9 9l2 1-3 5 7-5-2-1z" fill="#f3dc4c" stroke="#444" strokeWidth=".8" />
            </Icon>
          </Tool>
        </SmallGrid>
      </RibbonPanel>
      <ReviewPanel>
        Review
        <Caret />
      </ReviewPanel>
      <RibbonPanel title="Help" width={47}>
        <BigButton>
          <Icon size={30} h={30} box="0 0 30 30">
            <circle cx="8" cy="18" r="7.500" fill="#c81f37" stroke="none" />
            <path d="M5 17q0-4 3-4 4 0 3 3l-2 2 3 4" stroke="#f6ccd2" strokeWidth="2" />
            <circle cx="17" cy="3" r="2" fill="#e5e5e5" stroke="none" />
          </Icon>
          Help
        </BigButton>
      </RibbonPanel>
    </Ribbon>
  );
}

function ToolPalette() {
  return (
    <Palette>
      <PaletteMain>
        <PaletteTitle>
          <svg width="3" height="11" fill="#bbb" aria-hidden="true">
            <path d="M0 0h3v1H0zM0 3h3v1H0zM0 6h3v1H0zM0 9h3v1H0z" />
          </svg>
          TOOL ...
        </PaletteTitle>
        <PaletteScroll>
          <Thumb />
          <PaletteList>
            {bars.map(([size, color]) => (
              <PaletteItem key={size}>
                <Swatch $color={color}>{size}</Swatch>
                <ItemLabel>bar {size}</ItemLabel>
              </PaletteItem>
            ))}
            <Divider />
            {leaders.map((d) => (
              <PaletteItem key={d}>
                <Swatch>
                  <svg width="30" height="30" fill="none" stroke="#111" strokeWidth="2" aria-hidden="true">
                    <path d={d} />
                    <Glyph x="18" y="13" size={16} color="#23a04c">
                      S
                    </Glyph>
                  </svg>
                </Swatch>
                <ItemLabel $wrap>Leader d//s</ItemLabel>
              </PaletteItem>
            ))}
            <PaletteItem aria-label="More">
              <Swatch />
            </PaletteItem>
          </PaletteList>
        </PaletteScroll>
      </PaletteMain>
      <PaletteTabs>
        {paletteTabs.map((tab, i) => (
          <PaletteTab key={i} $active={i === 0}>
            {tab}
          </PaletteTab>
        ))}
        <TabStack />
      </PaletteTabs>
    </Palette>
  );
}

function DrawingArea() {
  return (
    <Canvas>
      <CanvasDrawing />
      <ViewportButtons>
        <Tool label="Minimize drawing">
          <Icon size={10}>
            <path d="M1 12h14" stroke="#fff" strokeWidth="4" />
          </Icon>
        </Tool>
        <Tool label="Restore drawing">
          <Icon size={11}>
            <path d="M2 6h8v8H2zM6 5V2h8v8h-3" stroke="#fff" strokeWidth="2" />
          </Icon>
        </Tool>
        <Tool label="Close drawing">
          <Cross color="#fff" size={9} />
        </Tool>
      </ViewportButtons>
      <ViewCube>
        <Compass />
      </ViewCube>
      <WcsButton>
        WCS
        <svg width="7" height="2" aria-hidden="true">
          <path d="M0 1h7" stroke="#9a9ca5" />
        </svg>
      </WcsButton>
      <NavBar>
        <Icon size={24}>
          <path d="M2 3h12v6q0 5-6 5t-6-5z" stroke="#3f4148" />
          <circle cx="8" cy="8" r="3.500" stroke="#3f4148" />
        </Icon>
        <Icon size={24}>
          <path d="M4 14L1 8l3 1V4l2-1 1 4V2l2-1v5l2-4 1 1v4l2-2v5q-1 4-4 5z" stroke="#3f4148" />
        </Icon>
        <Icon size={24}>
          <path d="M2 2l11 11M13 2L2 13M1 4l3-3M11 11h4v4h-4z" stroke="#3f4148" />
        </Icon>
        <Icon size={24}>
          <path d="M8 1v14M1 8h14M5 4l3-3 3 3M3 11q5 4 10 0" stroke="#3f4148" />
        </Icon>
        <Icon size={24}>
          <path d="M1 2h14v4H1zM1 6h10v9H1zM5 8l4 3-4 2z" stroke="#3f4148" />
        </Icon>
      </NavBar>
    </Canvas>
  );
}

function CommandLine() {
  return (
    <Command>
      <CommandGrip>
        <svg width="15" height="5" fill="none" stroke="#bbb" strokeDasharray="1 1" aria-hidden="true">
          <path d="M0 .5h15M0 2.500h15M0 4.500h15" />
        </svg>
        <Cross color="#fff" size={9} />
        <Icon size={13}>
          <path d="M6 7l7 7" stroke="#fff" strokeWidth="3" strokeLinecap="round" />
          <path d="M7 2L5 5 2 5M1 5q0 4 5 3 3-3 1-6" stroke="#fff" strokeWidth="2" />
        </Icon>
      </CommandGrip>
      <CommandBody>
        <History>{"3 bars at 57 centres ( 41 clear. )\nSet Number is 43."}</History>
        <Prompt>
          <svg width="14" height="13" viewBox="0 0 14 13" fill="none" aria-hidden="true">
            <path d="M.5.5h13v12H.5z" fill="#e6e8ee" stroke="#a9a9b1" />
            <path d="M3 3l3 3-3 3M7 10h4" stroke="#444" strokeWidth="1.500" />
          </svg>
          <Caret w={6} color="#888" />
          <CommandInput placeholder="Type a command" aria-label="Command" />
        </Prompt>
      </CommandBody>
    </Command>
  );
}

function BottomBar() {
  return (
    <Footer>
      <LayoutTabs>
        <LayoutTab $active>Model</LayoutTab>
        <LayoutTab>Layout 2</LayoutTab>
        <LayoutTab>Layout1</LayoutTab>
        <AddTab aria-label="New layout" $width={22}>
          <Plus />
        </AddTab>
      </LayoutTabs>
      <StatusBar>
        <StatusGroup>
          <span>MODEL</span>
          <Tool label="Grid">
            <Icon size={18} box="-2 0 18 16">
              <path d="M3.500 1v14M6.500 1v14M9.500 1v14M12.500 1v14M1 3.500h14M1 6.500h14M1 9.500h14M1 12.500h14" stroke={BLUE} />
            </Icon>
          </Tool>
          <Tool label="Snap">
            <Icon>
              <path d="M2 2.500h13M2 5.500h13M2 8.500h13M2 11.500h13M2 14.500h13" stroke="#555" strokeDasharray="1 2" />
            </Icon>
          </Tool>
          <Caret w={8} color="#111" />
        </StatusGroup>
        <StatusGroup>
          <Tool label="Ortho">
            <Icon>
              <path d="M3 2v11h12M3 9h4v4" stroke={BLUE} strokeWidth="1.500" />
            </Icon>
          </Tool>
          <Tool label="Polar">
            <Icon>
              <circle cx="7" cy="9" r="6" stroke="#444" strokeWidth="1.500" />
              <path d="M7 9h8M7 9l4-4" stroke="#444" />
            </Icon>
          </Tool>
          <Caret w={7} color="#111" />
          <Tool label="Isometric">
            <Icon>
              <path d="M1 2l14 13M8 0v16" stroke="#444" strokeWidth="1.300" />
            </Icon>
          </Tool>
          <Caret w={7} color="#111" />
          <Tool label="Object tracking">
            <Icon>
              <path d="M15 2L2 14h13" stroke={BLUE} strokeWidth="1.500" />
              <path d="M8 6l3 3" stroke={BLUE} strokeWidth="2" />
            </Icon>
          </Tool>
          <Tool label="Object snap">
            <Icon>
              <path d="M3 3h11v11H3z" stroke={BLUE} strokeWidth="1.500" />
              <path d="M1 1h4v4H1z" fill="#2cc136" stroke="#111" />
            </Icon>
          </Tool>
          <Caret w={7} color="#111" />
        </StatusGroup>
        <StatusGroup>
          <Tool label="Annotation visibility">
            <Person color={BLUE} extra={<circle cx="12" cy="4" r="2.500" fill="#e5e5e5" stroke={BLUE} />} />
          </Tool>
          <Tool label="Auto scale">
            <Person extra={<path d="M14 1l-4 4h4l-3 4" stroke="#444" strokeWidth="1.500" />} />
          </Tool>
          <Tool label="Annotation scale">
            <Person />
          </Tool>
          <span>1:1</span>
          <Caret w={7} color="#111" />
        </StatusGroup>
        <StatusGroup>
          <Tool label="Workspace">
            <Icon>
              <circle cx="8" cy="8" r="5" stroke="#555" strokeWidth="3" strokeDasharray="3 1" />
              <circle cx="8" cy="8" r="3" stroke="#555" strokeWidth="2" />
            </Icon>
          </Tool>
          <Caret w={7} color="#111" />
          <Tool label="Annotation monitor">
            <Icon>
              <path d="M8 1v14M1 8h14" stroke="#555" strokeWidth="2" />
            </Icon>
          </Tool>
        </StatusGroup>
        <StatusGroup $gap={8}>
          <Tool label="Isolate objects">
            <Icon>
              <path d="M1.500 1.500h5v5h-5zM4 14.500l3-5 3 5z" stroke="#666" />
              <circle cx="12" cy="6" r="3" stroke="#666" />
            </Icon>
          </Tool>
          <Tool label="Hardware acceleration">
            <Icon>
              <circle cx="8" cy="8" r="7" fill="#bbb" stroke="#555" strokeWidth="1.500" />
              <path d="M5 5l4 4M8 9h2" stroke="#444" />
            </Icon>
          </Tool>
          <Tool label="Standards">
            <Icon>
              <path d="M4 1h7l3 3v8H4z" fill="#3c5f8e" stroke="#333" />
              <path d="M1 5h8v6H1z" fill="#ecd63f" stroke="#7b6d1d" />
              <path d="M6 11l3 3 6-6" stroke="#2f9a2c" strokeWidth="2.500" />
            </Icon>
          </Tool>
          <Tool label="Clean screen">
            <Icon>
              <path d="M1 3h14v11H1z" stroke="#555" strokeWidth="1.500" />
              <path d="M10 5h3v3zM3 9v3h3zM12 6L9 9M4 11l3-3" fill="#444" stroke="#444" />
            </Icon>
          </Tool>
          <Tool label="Customization">
            <Icon>
              <path d="M1 3.500h14M1 8.500h14M1 13.500h14" stroke="#555" strokeWidth="2" />
            </Icon>
          </Tool>
        </StatusGroup>
      </StatusBar>
    </Footer>
  );
}

function App() {
  return (
    <>
      <GlobalStyle />
      <Screen>
        <TopBar />
        <RibbonBar />
        <FileTabs>
          <FileTab $width={123}>Start</FileTab>
          <FileTab $width={122}>
            Drawing1*
            <Tool label="Close Drawing1">
              <Cross size={7} />
            </Tool>
          </FileTab>
          <FileTab $width={126} $active>
            cad rc detail*
            <Tool label="Close cad rc detail">
              <Cross size={7} />
            </Tool>
          </FileTab>
          <AddTab aria-label="New drawing">
            <Plus />
          </AddTab>
        </FileTabs>
        <Workspace>
          <ToolPalette />
          <Editor>
            <DrawingArea />
            <CommandLine />
          </Editor>
        </Workspace>
        <BottomBar />
        <ScreenEdge />
      </Screen>
    </>
  );
}

export default App;
